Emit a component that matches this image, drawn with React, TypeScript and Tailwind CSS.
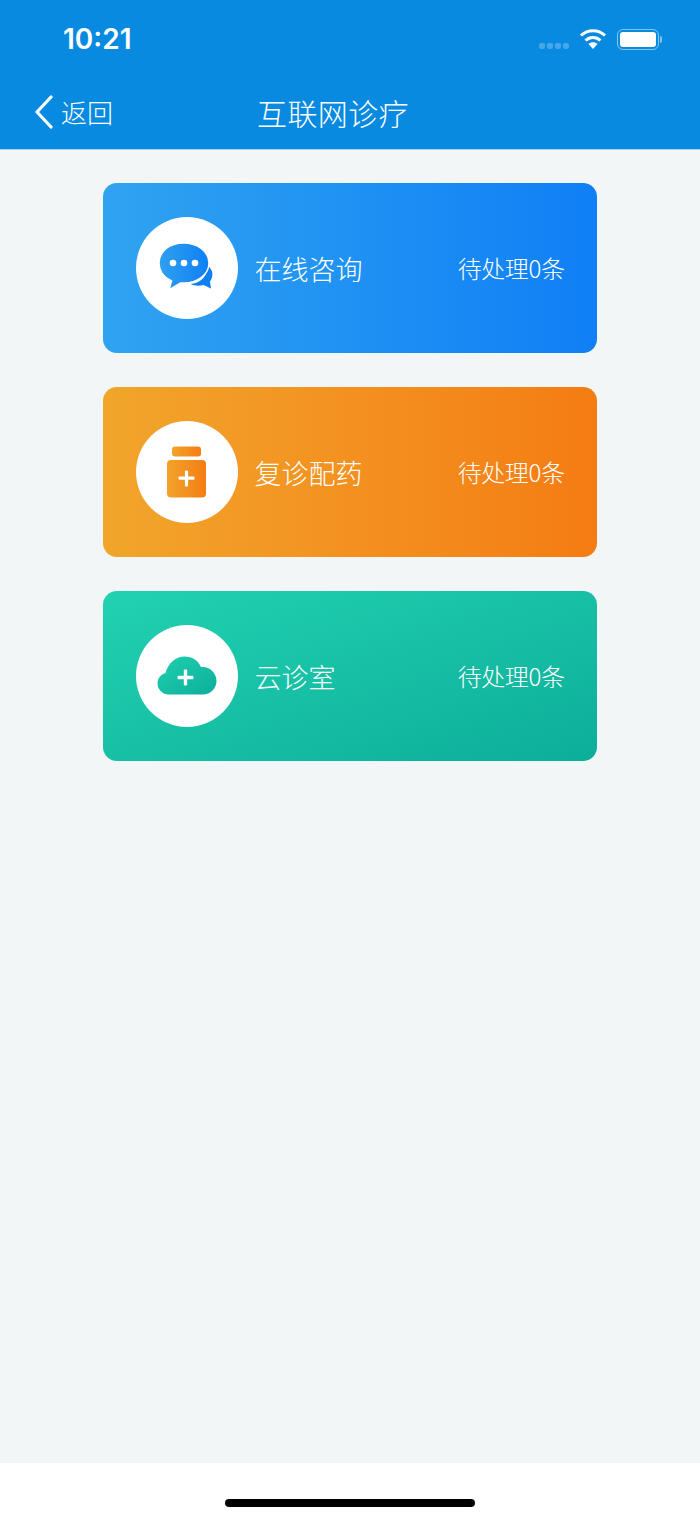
import React from "react";

const cjk = { fontFamily: '"Noto Sans CJK SC", "Noto Sans", sans-serif' };

function ChatIcon() {
  return (
    <svg width="60" height="60" viewBox="0 0 60 60">
      <defs>
        <linearGradient id="g1" x1="0" y1="0" x2="1" y2="0">
          <stop offset="0" stopColor="#2fa0ef" />
          <stop offset="1" stopColor="#0f80f4" />
        </linearGradient>
      </defs>
      <path d="M50.5 27.5c5.5 4 6.5 10.500 2.500 16l1 7-7.500-3.500c-4 1-9 1-13-1 9-.5 17-6.500 17-18.500z" fill="#0f80f4" />
      <path d="M26.500 5C12.500 5 2 13.500 2 25c0 8 5 14.500 12.500 18l-2.500 9 11.500-7c1 .1 2 .1 3 .1C40.500 45.100 52 36.500 52 25S40.500 5 26.500 5z" fill="url(#g1)" stroke="white" strokeWidth="1.500" />
      <circle cx="16" cy="25" r="3.300" fill="white" />
      <circle cx="27" cy="25" r="3.300" fill="white" />
      <circle cx="38" cy="25" r="3.300" fill="white" />
    </svg>
  );
}

function BottleIcon() {
  return (
    <svg width="40" height="52" viewBox="0 0 40 52">
      <defs>
        <linearGradient id="g2" x1="0" y1="0" x2="1" y2="0">
          <stop offset="0" stopColor="#f2a32b" />
          <stop offset="1" stopColor="#f47d14" />
        </linearGradient>
      </defs>
      <rect x="5" y="0.500" width="29" height="10" rx="3" fill="url(#g2)" />
      <rect x="0" y="14" width="39" height="37.500" rx="4" fill="url(#g2)" />
      <rect x="11.500" y="30.500" width="16" height="3.200" rx="1" fill="white" />
      <rect x="17.900" y="24.500" width="3.200" height="16" rx="1" fill="white" />
    </svg>
  );
}

function CloudIcon() {
  return (
    <svg width="60" height="40" viewBox="0 0 60 40">
      <defs>
        <linearGradient id="g3" x1="0" y1="0" x2="1" y2="1">
          <stop offset="0" stopColor="#1fcfae" />
          <stop offset="1" stopColor="#0daf9b" />
        </linearGradient>
      </defs>
      <path d="M12 38.500C5.500 38.500 .5 33.500 .5 27.500c0-5 3-9 8-10.500C11 7.500 18.500.5 27.500.5c7.500 0 13.500 4 16.500 10.500 8-1 15.500 5.500 15.500 14 0 7.500-6 13.500-13.500 13.500z" fill="url(#g3)" />
      <rect x="20.500" y="19.800" width="16" height="3.400" rx="1" fill="white" />
      <rect x="26.800" y="13.500" width="3.400" height="16" rx="1" fill="white" />
    </svg>
  );
}

function Card({ bg, label, icon }: { bg: string; label: string; icon: React.ReactNode }) {
  return (
    <div className={`flex h-[170px] w-[494px] items-center rounded-[14px] pl-[33px] pr-[32px] text-white ${bg}`}>
      <div className="flex h-[102px] w-[102px] shrink-0 items-center justify-center rounded-full bg-white">{icon}</div>
      <div className="ml-[17px] flex-1 text-[27px] font-light leading-none">{label}</div>
      <div className="text-[24px] font-light leading-none tracking-[-0.4px]">待处理0条</div>
    </div>
  );
}

export default function App() {
  return (
    <div className="flex h-[1521px] w-[700px] flex-col overflow-hidden bg-[#f2f6f6]" style={cjk}>
      <header className="h-[150px] shrink-0 border-b border-[#a9d2f4] bg-[#088ae0] text-white">
        <div className="flex h-[78px] items-center justify-between pl-[63px] pr-[38px]">
          <span className="text-[28px] font-semibold leading-none" style={{ fontFamily: "Inter, sans-serif" }}>10:21</span>
          <div className="flex items-center">
            <div className="mr-[10px] mt-[13px] flex gap-[2px]">
              <span className="h-[6px] w-[6px] rounded-[2px] bg-white/25" />
              <span className="h-[6px] w-[6px] rounded-[2px] bg-white/25" />
              <span className="h-[6px] w-[6px] rounded-[2px] bg-white/25" />
              <span className="h-[6px] w-[6px] rounded-[2px] bg-white/25" />
            </div>
            <svg width="28" height="22" viewBox="0 0 28 22" className="mr-[10px]">
              <path d="M14 21l-4.500-5c2.500-2.200 6.500-2.200 9 0z" fill="white" />
              <path d="M6.500 12.500c4.300-4 10.700-4 15 0" fill="none" stroke="white" strokeWidth="3" />
              <path d="M2 7.500C8.800 1.200 19.200 1.200 26 7.500" fill="none" stroke="white" strokeWidth="3" />
            </svg>
            <div className="flex items-center">
              <div className="h-[21px] w-[42px] rounded-[6px] border-[1.500px] border-white/50 p-[2px]">
                <div className="h-full w-full rounded-[3px] bg-white" />
              </div>
              <div className="ml-[1px] h-[7px] w-[2px] rounded-r-[2px] bg-white/50" />
            </div>
          </div>
        </div>
        <div className="grid h-[71px] grid-cols-[1fr_auto_1fr] items-center pb-[3px] pl-[34px]">
          <div className="flex items-center">
            <svg width="20" height="34" viewBox="0 0 20 34">
              <path d="M17 2L3 17l14 15" fill="none" stroke="white" strokeWidth="3.200" strokeLinecap="round" strokeLinejoin="round" />
            </svg>
            <span className="ml-[7px] text-[26px] font-light leading-none">返回</span>
          </div>
          <h1 className="mr-[34px] -translate-x-[17px] text-[30px] font-light leading-none tracking-[0.4px]">互联网诊疗</h1>
          <div />
        </div>
      </header>
      <main className="flex flex-1 flex-col items-center gap-[34px] pr-[1px] pt-[33px]">
        <Card bg="bg-gradient-to-r from-[#30a3f0] to-[#0f7ff5]" label="在线咨询" icon={<ChatIcon />} />
        <Card bg="bg-gradient-to-r from-[#f1a52b] to-[#f47c13]" label="复诊配药" icon={<BottleIcon />} />
        <Card bg="bg-gradient-to-br from-[#21d2b0] to-[#0cae9a]" label="云诊室" icon={<CloudIcon />} />
      </main>
      <footer className="flex h-[58px] shrink-0 items-start justify-center bg-white pt-[36px]">
        <div className="h-[8px] w-[250px] rounded-full bg-black" />
      </footer>
    </div>
  );
}
